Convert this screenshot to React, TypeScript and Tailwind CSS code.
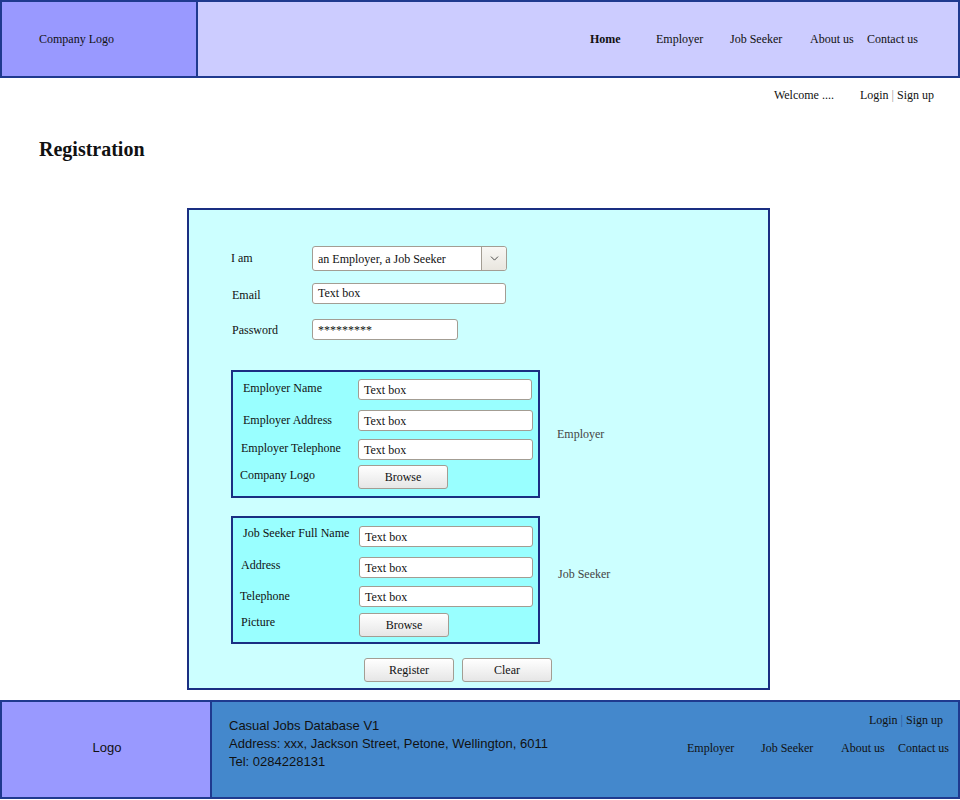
import { ChevronDown } from "lucide-react";

const serif = "font-['Liberation_Serif',serif]";
const arial = "font-['Liberation_Sans',Arial,sans-serif]";

const nav = [
  { label: "Home", w: "w-[66px]", bold: true },
  { label: "Employer", w: "w-[74px]" },
  { label: "Job Seeker", w: "w-[80px]" },
  { label: "About us", w: "w-[57px]" },
  { label: "Contact us", w: "" },
];

function TextBox({ value = "Text box", w }: { value?: string; w: string }) {
  return (
    <div
      className={`${w} h-[21px] bg-white border border-[#a39d93] rounded-[3px] pl-[5px] flex items-center text-[12px] text-[#111]`}
    >
      {value}
    </div>
  );
}

function Btn({ label, w = "w-[90px]" }: { label: string; w?: string }) {
  return (
    <div
      className={`${w} h-[24px] border border-[#a39d93] rounded-[3px] bg-gradient-to-b from-white to-[#e6e6e6] flex items-center justify-center text-[12px] text-[#111]`}
    >
      {label}
    </div>
  );
}

function Row({ label, lx, top, lw = "w-[125px]", children }: { label: string; lx: string; top: string; lw?: string; children: React.ReactNode }) {
  return (
    <div className={`flex items-start ${top}`}>
      <div className={`${lw} ${lx} whitespace-nowrap text-[12px] text-[#111] leading-none`}>{label}</div>
      {children}
    </div>
  );
}

export default function App() {
  return (
    <div className={`${serif} w-[960px] bg-white text-[#111]`}>
      {/* header */}
      <header className="h-[78px] border-2 border-[#1f3a8f] flex">
        <div className="w-[196px] bg-[#9999ff] border-r-2 border-[#1f3a8f] flex items-center pl-[37px] text-[12px]">
          Company Logo
        </div>
        <nav className="flex-1 bg-[#ccccff] flex items-center justify-end pr-[40px] text-[12px]">
          {nav.map((n) => (
            <span key={n.label} className={`${n.w} ${n.bold ? "font-bold" : ""}`}>
              {n.label}
            </span>
          ))}
        </nav>
      </header>

      <div className="flex justify-end pr-[26px] pt-[8px] text-[12px]">
        <span className="w-[86px]">Welcome ....</span>
        <span>
          Login <span className="text-[#999]">|</span> Sign up
        </span>
      </div>

      <h1 className="pl-[39px] mt-[35px] text-[20px] font-bold leading-none">Registration</h1>

      {/* form */}
      <div className="ml-[187px] mt-[49px] w-[583px] h-[482px] border-2 border-[#1a2f82] bg-[#ccffff] pl-[42px] pt-[36px]">
        <div className="flex items-center">
          <div className="w-[81px] text-[12px] -mt-[2px]">I am</div>
          <div className="w-[195px] h-[25px] bg-white border border-[#a39d93] rounded-[3px] flex">
            <div className="flex-1 pl-[5px] flex items-center text-[12px]">an Employer, a Job Seeker</div>
            <div className="w-[25px] border-l border-[#a39d93] bg-gradient-to-b from-[#f8f7f4] to-[#e9e6df] rounded-r-[3px] flex items-center justify-center">
              <ChevronDown size={13} strokeWidth={1.6} color="#333" />
            </div>
          </div>
        </div>
        <div className="flex items-center mt-[11px]">
          <div className="w-[81px] text-[12px] pl-[1px] pt-[4px]">Email</div>
          <TextBox w="w-[194px]" />
        </div>
        <div className="flex items-center mt-[15px]">
          <div className="w-[81px] text-[12px] pl-[1px]">Password</div>
          <TextBox w="w-[146px]" value="*********" />
        </div>

        <div className="flex items-center mt-[30px]">
          <div className="w-[309px] h-[128px] border-2 border-[#1a2f82] bg-[#99ffff] pt-[7px]">
            <Row label="Employer Name" lx="pl-[10px] pt-[3px]" top="">
              <TextBox w="w-[174px]" />
            </Row>
            <Row label="Employer Address" lx="pl-[10px] pt-[4px]" top="mt-[10px]">
              <TextBox w="w-[175px]" />
            </Row>
            <Row label="Employer Telephone" lx="pl-[8px] pt-[3px]" top="mt-[8px]">
              <TextBox w="w-[175px]" />
            </Row>
            <Row label="Company Logo" lx="pl-[7px] pt-[4px]" top="mt-[5px]">
              <Btn label="Browse" />
            </Row>
          </div>
          <div className="ml-[17px] text-[12px] text-[#444]">Employer</div>
        </div>

        <div className="flex items-center mt-[18px]">
          <div className="w-[309px] h-[128px] border-2 border-[#1a2f82] bg-[#99ffff] pt-[8px]">
            <Row label="Job Seeker Full Name" lw="w-[126px]" lx="pl-[10px] pt-[1px]" top="">
              <TextBox w="w-[174px]" />
            </Row>
            <Row label="Address" lw="w-[126px]" lx="pl-[8px] pt-[2px]" top="mt-[10px]">
              <TextBox w="w-[174px]" />
            </Row>
            <Row label="Telephone" lw="w-[126px]" lx="pl-[7px] pt-[4px]" top="mt-[8px]">
              <TextBox w="w-[174px]" />
            </Row>
            <Row label="Picture" lw="w-[126px]" lx="pl-[8px] pt-[3px]" top="mt-[6px]">
              <Btn label="Browse" />
            </Row>
          </div>
          <div className="ml-[18px] -mt-[12px] text-[12px] text-[#444]">Job Seeker</div>
        </div>

        <div className="flex gap-[8px] mt-[14px] ml-[133px]">
          <Btn label="Register" />
          <Btn label="Clear" />
        </div>
      </div>

      {/* footer */}
      <footer className="mt-[10px] h-[99px] border-2 border-[#1f3a8f] flex">
        <div className="w-[210px] bg-[#9999ff] border-r-2 border-[#1f3a8f] flex items-center justify-center text-[13px] pl-[2px] pb-[4px]">
          <span className={arial}>Logo</span>
        </div>
        <div className="flex-1 bg-[#4488cc] flex">
          <div className={`${arial} pl-[17px] pt-[15px] text-[13px] leading-[18px] text-[#111]`}>
            <div>Casual Jobs Database V1</div>
            <div>Address: xxx, Jackson Street, Petone, Wellington, 6011</div>
            <div>Tel: 0284228131</div>
          </div>
          <div className="flex-1 flex flex-col items-end pr-[9px] pt-[9px] text-[12px]">
            <div className="pr-[6px]">
              Login <span className="text-[#2a5aa0]">|</span> Sign up
            </div>
            <div className="flex mt-[10px]">
              {nav.slice(1).map((n) => (
                <span key={n.label} className={n.w}>
                  {n.label}
                </span>
              ))}
            </div>
          </div>
        </div>
      </footer>
    </div>
  );
}
